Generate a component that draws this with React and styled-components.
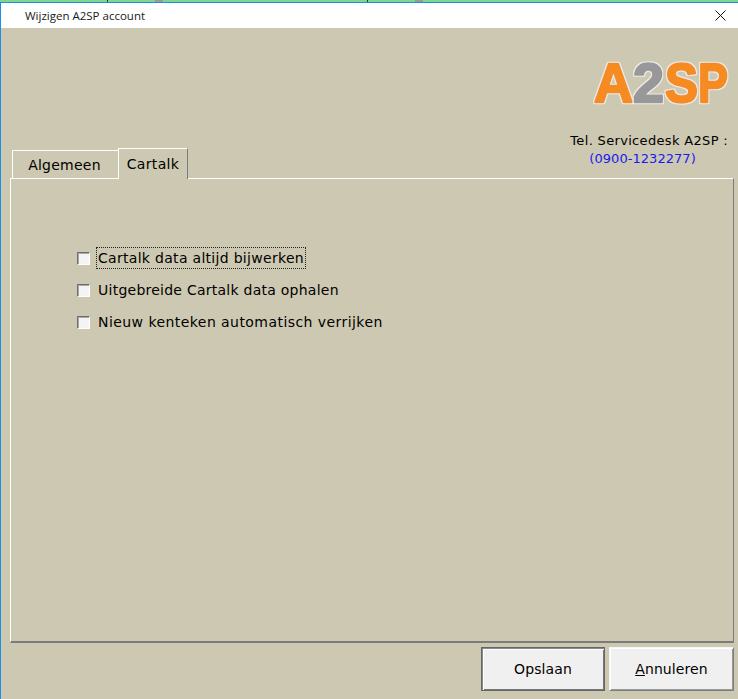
import React from 'react';
import styled, { createGlobalStyle } from 'styled-components';

const GlobalStyle = createGlobalStyle`
    html, body {
        margin: 0;
        padding: 0;
        background: #cdc8b2;
    }
`;

const Desktop = styled.div`
    width: 738px;
    height: 699px;
    overflow: hidden;
    display: flex;
    flex-direction: column;
    background:
        linear-gradient(#9a9a9a, #9a9a9a) 155px 0 / 8px 2px no-repeat,
        linear-gradient(#9a9a9a, #9a9a9a) 415px 0 / 8px 2px no-repeat,
        linear-gradient(#333, #333) 107px 0 / 1px 2px no-repeat,
        linear-gradient(#333, #333) 367px 0 / 1px 2px no-repeat,
        #7fd68f;
`;

const Window = styled.div`
    margin-top: 2px;
    flex: 1;
    display: flex;
    flex-direction: column;
    min-height: 0;
    border-top: 1px solid #1a8fe3;
    border-left: 1px solid #1a8fe3;
    background: #cdc8b2;
    font-family: "DejaVu Sans", Tahoma, sans-serif;
    color: #000;
`;

const TitleBar = styled.div`
    height: 25px;
    flex: none;
    display: flex;
    align-items: center;
    justify-content: space-between;
    padding: 0 12px 0 24px;
    background: #fff;
    font-family: "Open Sans", "Noto Sans", sans-serif;
    font-size: 11.5px;
    color: #1a1a1a;
`;

const Body = styled.div`
    flex: 1;
    display: flex;
    flex-direction: column;
    min-height: 0;
    padding: 0 4px 8px 9px;
`;

const Header = styled.div`
    height: 150px;
    flex: none;
    display: flex;
    align-items: flex-end;
    justify-content: space-between;
`;

const Tabs = styled.div`
    display: flex;
    align-items: flex-end;
    padding-left: 2px;
`;

const Tab = styled.div`
    box-sizing: border-box;
    width: ${p => p.$active ? '70px' : '106px'};
    height: ${p => p.$active ? '31px' : '28px'};
    display: flex;
    justify-content: center;
    align-items: center;
    padding-top: ${p => p.$active ? '0' : '1px'};
    padding-right: ${p => p.$active ? '0' : '2px'};
    font-size: 14px;
    letter-spacing: ${p => p.$active ? '0.35px' : '0.25px'};
    border-top: 1px solid #fff;
    border-left: 1px solid #fff;
    border-right: ${p => p.$active ? '1px solid #7b7b7b' : '0'};
    position: relative;
    z-index: ${p => p.$active ? 1 : 0};
    margin-bottom: ${p => p.$active ? '-1px' : '0'};
    background: #cdc8b2;
`;

const Brand = styled.div`
    display: flex;
    flex-direction: column;
    align-items: flex-end;
    padding: 0 6px 10px 0;
`;

const Logo = styled.svg`
    display: block;
    margin: 0 -10px 18px 0;
`;

const LogoLetter = styled.text`
    font-family: "Liberation Sans", Arial, sans-serif;
    font-weight: 700;
    font-size: 56px;
    stroke-width: 2.4px;
    stroke-linejoin: round;
    fill: ${p => p.$color};
    stroke: ${p => p.$color};
    filter: url(#logo-outline);
`;

const Phone = styled.div`
    font-size: 13px;
    line-height: 18px;
    letter-spacing: ${p => p.$link ? '0.05px' : '0.33px'};
    white-space: pre;
    color: ${p => p.$link ? '#1a1aee' : '#000'};
    align-self: ${p => p.$link ? 'flex-start' : 'flex-end'};
    padding-left: ${p => p.$link ? '19px' : '0'};
`;

const Panel = styled.div`
    flex: 1;
    min-height: 0;
    box-sizing: border-box;
    border-top: 1px solid #fff;
    border-left: 1px solid #fff;
    border-bottom: 2px solid #7b7b7b;
    border-right: 1px solid #7b7b7b;
    padding: 68px 0 0 66px;
    display: flex;
    flex-direction: column;
    gap: 10px;
`;

const Option = styled.div`
    display: flex;
    align-items: center;
    gap: 7px;
    height: 22px;
`;

const Box = styled.span`
    box-sizing: border-box;
    width: 13px;
    height: 13px;
    flex: none;
    background: #f4f4f4;
    border: 1px solid;
    border-color: #6d6d6d #fff #fff #6d6d6d;
    box-shadow: inset 1px 1px 0 #a9a9a9;
`;

const Label = styled.span`
    font-size: 14px;
    line-height: 20px;
    padding: 0 1px;
    letter-spacing: ${p => p.$spacing}px;
    outline: ${p => p.$focused ? '1px dotted #222' : 'none'};
`;

const Footer = styled.div`
    height: 48px;
    flex: none;
    display: flex;
    align-items: flex-end;
    justify-content: flex-end;
    gap: 4px;
`;

const Button = styled.div`
    box-sizing: border-box;
    width: ${p => p.$primary ? '124px' : '125px'};
    height: 44px;
    display: flex;
    align-items: center;
    justify-content: center;
    font-size: 14px;
    letter-spacing: 0.1px;
    background: #f0f0f0;
    border: 1px solid;
    border-color: ${p => p.$primary ? '#666' : '#f6f6f6 #7d7d7d #7d7d7d #f6f6f6'};
    box-shadow: ${p => p.$primary
        ? 'inset 1px 1px 0 #8a8a8a, inset 2px 2px 0 #fff, inset -1px -1px 0 #777'
        : 'inset 1px 1px 0 #fff, inset -1px -1px 0 #999'};
`;

const Accel = styled.span`
    text-decoration: underline;
`;

const CloseIcon = () => (
    <svg width="11" height="11" viewBox="0 0 11 11">
        <path d="M0.5 0.5 L10.5 10.5 M10.5 0.5 L0.5 10.5" stroke="#111" strokeWidth="1" fill="none" />
    </svg>
);

const A2spLogo = () => (
    <Logo width="146" height="64" viewBox="0 0 146 64">
        <defs>
            <filter id="logo-outline" x="-20%" y="-20%" width="140%" height="140%">
                <feMorphology in="SourceAlpha" operator="dilate" radius="1.4" result="grown" />
                <feFlood floodColor="#ecebe4" />
                <feComposite in2="grown" operator="in" result="outline" />
                <feMerge>
                    <feMergeNode in="outline" />
                    <feMergeNode in="SourceGraphic" />
                </feMerge>
            </filter>
        </defs>
        <LogoLetter x="2" y="52" textLength="39" lengthAdjust="spacingAndGlyphs" $color="#f68b23">A</LogoLetter>
        <LogoLetter x="41" y="52" textLength="31" lengthAdjust="spacingAndGlyphs" $color="#98989b">2</LogoLetter>
        <LogoLetter x="73" y="52" textLength="33" lengthAdjust="spacingAndGlyphs" $color="#f68b23">S</LogoLetter>
        <LogoLetter x="106" y="52" textLength="30" lengthAdjust="spacingAndGlyphs" $color="#f68b23">P</LogoLetter>
    </Logo>
);

const options = [
    { text: 'Cartalk data altijd bijwerken', spacing: 0.3 },
    { text: 'Uitgebreide Cartalk data ophalen', spacing: 0.25 },
    { text: 'Nieuw kenteken automatisch verrijken', spacing: 0.44 },
];

const App = () => (
    <>
        <GlobalStyle />
        <Desktop>
            <Window>
                <TitleBar>
                    <span>Wijzigen A2SP account</span>
                    <CloseIcon />
                </TitleBar>
                <Body>
                    <Header>
                        <Tabs>
                            <Tab>Algemeen</Tab>
                            <Tab $active>Cartalk</Tab>
                        </Tabs>
                        <Brand>
                            <A2spLogo />
                            <Phone>Tel. Servicedesk A2SP :</Phone>
                            <Phone $link>(0900-1232277)</Phone>
                        </Brand>
                    </Header>
                    <Panel>
                        {options.map((option, i) => (
                            <Option key={option.text}>
                                <Box />
                                <Label $focused={i === 0} $spacing={option.spacing}>{option.text}</Label>
                            </Option>
                        ))}
                    </Panel>
                    <Footer>
                        <Button $primary>Opslaan</Button>
                        <Button><span><Accel>A</Accel>nnuleren</span></Button>
                    </Footer>
                </Body>
            </Window>
        </Desktop>
    </>
);

export default App;
